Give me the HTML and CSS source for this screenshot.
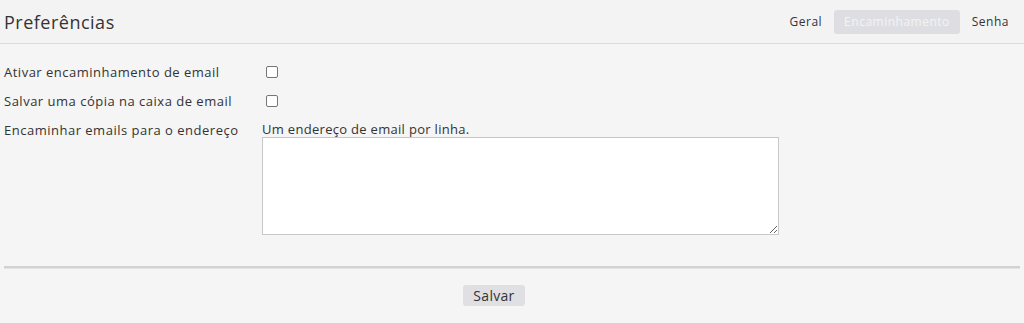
FILE: index.html
```html
<!DOCTYPE html>
<html lang="pt">
<head>
<meta charset="utf-8">
<link rel="stylesheet" href="styles.css">
</head>
<body>
<div class="page">
  <header class="header">
    <h1 class="title">Preferências</h1>
    <nav class="tabs">
      <span class="tab">Geral</span>
      <span class="tab active">Encaminhamento</span>
      <span class="tab">Senha</span>
    </nav>
  </header>
  <main class="form">
    <div class="row">
      <label class="label">Ativar encaminhamento de email</label>
      <span class="checkbox"></span>
    </div>
    <div class="row">
      <label class="label">Salvar uma cópia na caixa de email</label>
      <span class="checkbox"></span>
    </div>
    <div class="row top">
      <label class="label">Encaminhar emails para o endereço</label>
      <div class="field">
        <div class="hint">Um endereço de email por linha.</div>
        <textarea class="textarea"></textarea>
      </div>
    </div>
  </main>
  <div class="divider"></div>
  <div class="footer">
    <button class="btn">Salvar</button>
  </div>
</div>
</body>
</html>
```
FILE: styles.css
```css
html, body {
  margin: 0;
  padding: 0;
  background: #f5f5f5;
}
body {
  font-family: "Open Sans", "Liberation Sans", sans-serif;
  color: #333;
  width: 1024px;
  height: 323px;
  overflow: hidden;
}
.page {
  display: flex;
  flex-direction: column;
}
.header {
  height: 43px;
  background: #f3f3f3;
  border-bottom: 1px solid #dcdcdc;
  display: flex;
  align-items: center;
  justify-content: space-between;
  padding: 0 5px 0 4px;
}
.title {
  margin: 0;
  font-size: 18px;
  font-weight: 400;
  color: #333;
  letter-spacing: 0.5px;
}
.tabs {
  display: flex;
  align-items: center;
  gap: 2px;
}
.tab {
  font-size: 12px;
  letter-spacing: 0.5px;
  padding: 4px 10px;
  line-height: 16px;
  border-radius: 3px;
  color: #333;
}
.tab.active {
  background: #dedee2;
  color: #f3f3f5;
}
.form {
  padding: 19px 4px 0;
  display: flex;
  flex-direction: column;
  gap: 11px;
}
.row {
  display: flex;
  align-items: center;
  min-height: 18px;
}
.row.top {
  align-items: flex-start;
}
.label {
  width: 258px;
  font-size: 13px;
  letter-spacing: 0.5px;
  line-height: 18px;
}
.checkbox {
  width: 10px;
  height: 10px;
  border: 1px solid #767676;
  border-radius: 2px;
  background: #fff;
  margin-left: 4px;
}
.field {
  display: flex;
  flex-direction: column;
}
.hint {
  font-size: 13px;
  letter-spacing: 0.3px;
  line-height: 16px;
  color: #333;
}
.textarea {
  width: 515px;
  height: 96px;
  margin: 0;
  border: 1px solid #c8c8c8;
  background: #fff;
  padding: 0;
  display: block;
}
.divider {
  margin: 31px 4px 0;
  height: 1px;
  border-top: 2px solid #d2d2d2;
  background: #e3e3e3;
}
.footer {
  display: flex;
  justify-content: center;
  padding: 16px 36px 0 0;
}
.btn {
  font-family: "Open Sans", "Liberation Sans", sans-serif;
  font-size: 14px;
  letter-spacing: 0.3px;
  color: #333;
  background: #e0e0e4;
  border: none;
  border-radius: 3px;
  height: 21px;
  padding: 0 10px;
  line-height: 21px;
}
```
